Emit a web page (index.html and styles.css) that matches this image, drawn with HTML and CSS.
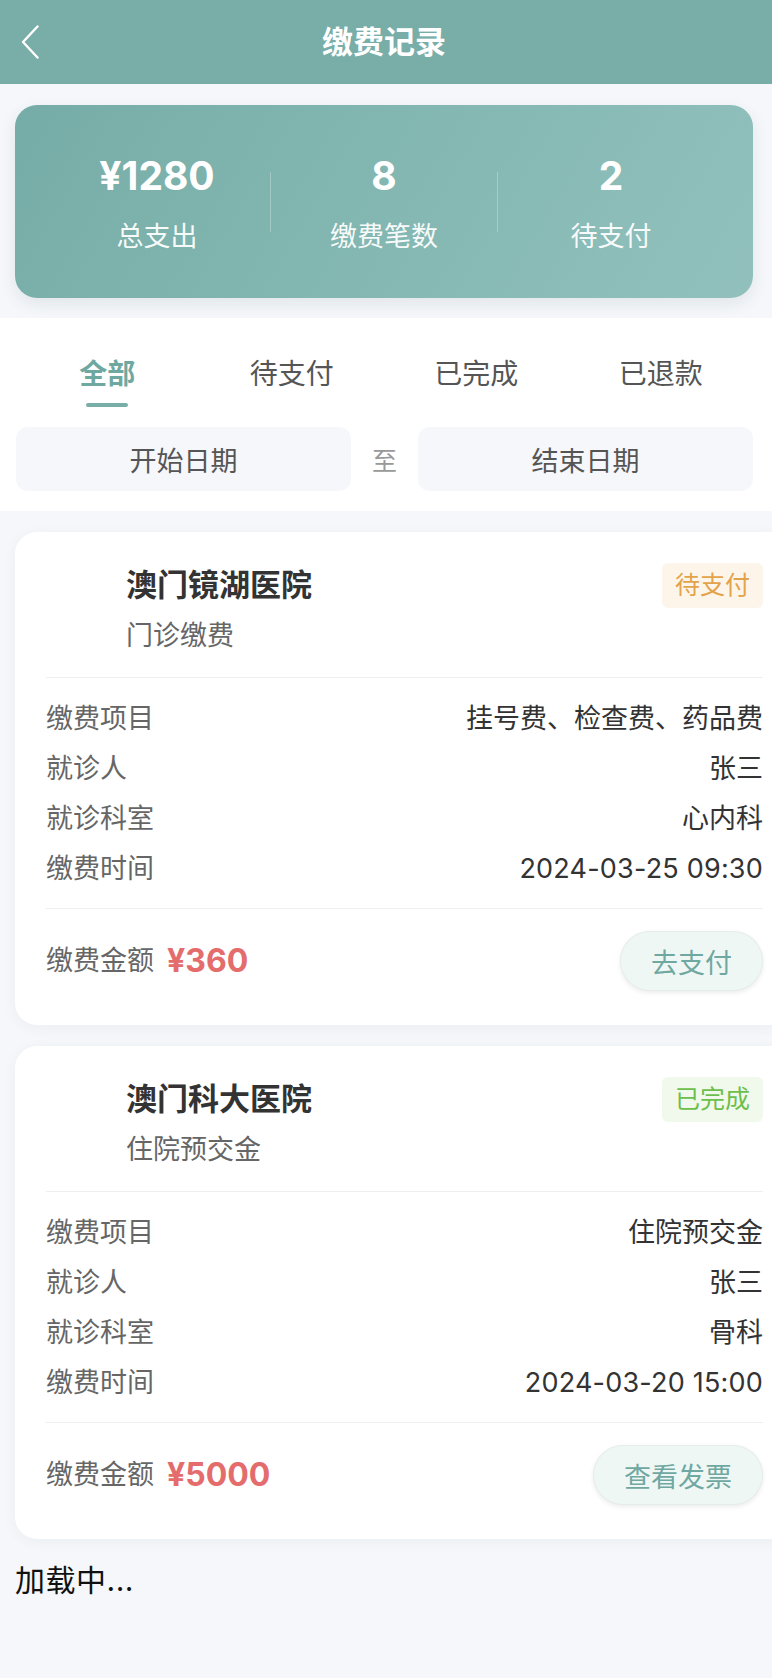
FILE: index.html
```html
<!DOCTYPE html>
<html lang="zh-CN">
<head>
<meta charset="utf-8">
<title>缴费记录</title>
<link rel="stylesheet" href="styles.css">
</head>
<body>
<div class="page">
  <header class="nav">
    <div class="nav-left">
      <svg class="back" width="18" height="34" viewBox="0 0 18 34"><polyline points="16.5,1.5 2,17 16.5,32.5" fill="none" stroke="#fff" stroke-width="2.4" stroke-linecap="round" stroke-linejoin="round"/></svg>
    </div>
    <h1 class="nav-title">缴费记录</h1>
    <div class="nav-right"></div>
  </header>

  <section class="stats">
    <div class="stat">
      <div class="stat-value">¥1280</div>
      <div class="stat-label">总支出</div>
    </div>
    <div class="stat-divider"></div>
    <div class="stat">
      <div class="stat-value">8</div>
      <div class="stat-label">缴费笔数</div>
    </div>
    <div class="stat-divider"></div>
    <div class="stat">
      <div class="stat-value">2</div>
      <div class="stat-label">待支付</div>
    </div>
  </section>

  <section class="filter">
    <div class="tabs">
      <div class="tab active"><span class="tab-text">全部</span><span class="tab-bar"></span></div>
      <div class="tab"><span class="tab-text">待支付</span><span class="tab-bar"></span></div>
      <div class="tab"><span class="tab-text">已完成</span><span class="tab-bar"></span></div>
      <div class="tab"><span class="tab-text">已退款</span><span class="tab-bar"></span></div>
    </div>
    <div class="dates">
      <div class="date-box">开始日期</div>
      <div class="date-sep">至</div>
      <div class="date-box">结束日期</div>
    </div>
  </section>

  <div class="list">
    <article class="card">
      <div class="card-head">
        <div class="head-main">
          <div class="logo"></div>
          <div class="head-info">
            <div class="hospital">澳门镜湖医院</div>
            <div class="kind">门诊缴费</div>
          </div>
        </div>
        <span class="badge pending">待支付</span>
      </div>
      <div class="card-body">
        <div class="row"><span class="row-label">缴费项目</span><span class="row-value">挂号费、检查费、药品费</span></div>
        <div class="row"><span class="row-label">就诊人</span><span class="row-value">张三</span></div>
        <div class="row"><span class="row-label">就诊科室</span><span class="row-value">心内科</span></div>
        <div class="row"><span class="row-label">缴费时间</span><span class="row-value num">2024-03-25 09:30</span></div>
      </div>
      <div class="card-foot">
        <div class="amount"><span class="amount-label">缴费金额</span><span class="amount-value">¥360</span></div>
        <button class="action">去支付</button>
      </div>
    </article>

    <article class="card">
      <div class="card-head">
        <div class="head-main">
          <div class="logo"></div>
          <div class="head-info">
            <div class="hospital">澳门科大医院</div>
            <div class="kind">住院预交金</div>
          </div>
        </div>
        <span class="badge done">已完成</span>
      </div>
      <div class="card-body">
        <div class="row"><span class="row-label">缴费项目</span><span class="row-value">住院预交金</span></div>
        <div class="row"><span class="row-label">就诊人</span><span class="row-value">张三</span></div>
        <div class="row"><span class="row-label">就诊科室</span><span class="row-value">骨科</span></div>
        <div class="row"><span class="row-label">缴费时间</span><span class="row-value num">2024-03-20 15:00</span></div>
      </div>
      <div class="card-foot">
        <div class="amount"><span class="amount-label">缴费金额</span><span class="amount-value">¥5000</span></div>
        <button class="action">查看发票</button>
      </div>
    </article>

    <div class="loading">加载中...</div>
  </div>
</div>
</body>
</html>
```

FILE: styles.css
```css
* { box-sizing: border-box; }
html, body {
  margin: 0;
  padding: 0;
  overflow-x: hidden;
}
body {
  background: #f5f7fa;
  font-family: Inter, "Noto Sans CJK SC", sans-serif;
  color: #333;
}
.page {
  width: 772px;
  min-height: 1678px;
  overflow: hidden;
  background: #f5f7fa;
}

/* nav */
.nav {
  height: 84px;
  background: #78ada8;
  display: grid;
  grid-template-columns: 1fr auto 1fr;
  align-items: center;
}
.nav-left {
  padding-left: 21px;
  display: flex;
  align-items: center;
}
.back { display: block; }
.nav-title {
  margin: 0;
  font-size: 31px;
  font-weight: 700;
  color: #fff;
  line-height: 40px;
  padding-right: 4px;
}

/* stats */
.stats {
  margin: 21px 19px 0 15px;
  height: 193px;
  border-radius: 22px;
  background: linear-gradient(120deg, #76aca7 0%, #85b8b3 55%, #92c1bd 100%);
  box-shadow: 0 6px 16px rgba(60, 80, 90, 0.10);
  display: flex;
  align-items: center;
  padding: 0 29px;
  color: #fff;
}
.stat {
  flex: 1;
  display: flex;
  flex-direction: column;
  align-items: center;
  padding-top: 4px;
}
.stat-value {
  font-size: 39px;
  font-weight: 700;
  line-height: 48px;
}
.stat-label {
  margin-top: 19px;
  font-size: 27px;
  line-height: 36px;
  color: rgba(255, 255, 255, 0.95);
}
.stat-divider {
  width: 1px;
  height: 60px;
  background: rgba(255, 255, 255, 0.28);
}

/* filter */
.filter {
  margin-top: 20px;
  background: #fff;
  padding: 36px 19px 20px 15px;
}
.tabs {
  display: flex;
}
.tab {
  flex: 1;
  display: flex;
  flex-direction: column;
  align-items: center;
}
.tab-text {
  font-size: 28px;
  line-height: 40px;
  color: #555;
}
.tab-bar {
  margin-top: 9px;
  width: 42px;
  height: 4px;
  border-radius: 2px;
  background: transparent;
}
.tab.active .tab-text {
  color: #6fa8a1;
  font-weight: 600;
}
.tab.active .tab-bar { background: #78ada8; }

.dates {
  margin-top: 20px;
  display: flex;
  align-items: center;
  gap: 21px;
  padding-left: 1px;
}
.date-box {
  flex: 1;
  height: 64px;
  border-radius: 12px;
  background: #f5f7fa;
  display: flex;
  align-items: center;
  justify-content: center;
  font-size: 27px;
  color: #555;
}
.date-sep {
  font-size: 25px;
  color: #999;
}

/* list */
.list {
  padding: 21px 0 0 15px;
}
.card {
  width: 779px;
  background: #fff;
  border-radius: 22px;
  padding: 31px 31px 34px 31px;
  box-shadow: 0 3px 14px rgba(60, 80, 100, 0.05);
  margin-bottom: 21px;
}
.card-head {
  display: flex;
  justify-content: space-between;
  align-items: flex-start;
  padding-bottom: 23px;
  border-bottom: 1px solid #efefef;
}
.head-main {
  display: flex;
}
.logo {
  width: 64px;
  margin-right: 16px;
}
.hospital {
  font-size: 31px;
  font-weight: 700;
  line-height: 44px;
  color: #333;
}
.kind {
  margin-top: 11px;
  font-size: 27px;
  line-height: 36px;
  color: #666;
}
.badge {
  height: 45px;
  padding: 0 13px;
  border-radius: 6px;
  font-size: 25px;
  line-height: 45px;
}
.badge.pending {
  background: #fdf5ea;
  color: #e3a34a;
}
.badge.done {
  background: #f0f9eb;
  color: #6cbf4a;
}

.card-body {
  padding: 23px 0 21px;
  border-bottom: 1px solid #efefef;
  display: flex;
  flex-direction: column;
  gap: 14px;
}
.row {
  display: flex;
  justify-content: space-between;
  font-size: 27px;
  line-height: 36px;
}
.row-label { color: #666; }
.row-value { color: #333; }
.row-value.num { letter-spacing: 0.2px; }

.card-foot {
  padding-top: 22px;
  display: flex;
  justify-content: space-between;
  align-items: center;
}
.amount {
  display: flex;
  align-items: center;
}
.amount-label {
  font-size: 27px;
  color: #666;
  line-height: 36px;
}
.amount-value {
  margin-left: 13px;
  font-size: 32px;
  font-weight: 700;
  color: #e46c6c;
  line-height: 40px;
}
.action {
  height: 60px;
  padding: 0 30px;
  border-radius: 30px;
  border: 1px solid rgba(0, 0, 0, 0.04);
  background: #eff7f5;
  color: #6fa8a1;
  font-family: Inter, "Noto Sans CJK SC", sans-serif;
  font-size: 27px;
  box-shadow: 0 2px 5px rgba(0, 0, 0, 0.08);
}

.loading {
  margin-top: 3px;
  font-size: 30px;
  line-height: 40px;
  color: #111;
  letter-spacing: 0.5px;
}
```
